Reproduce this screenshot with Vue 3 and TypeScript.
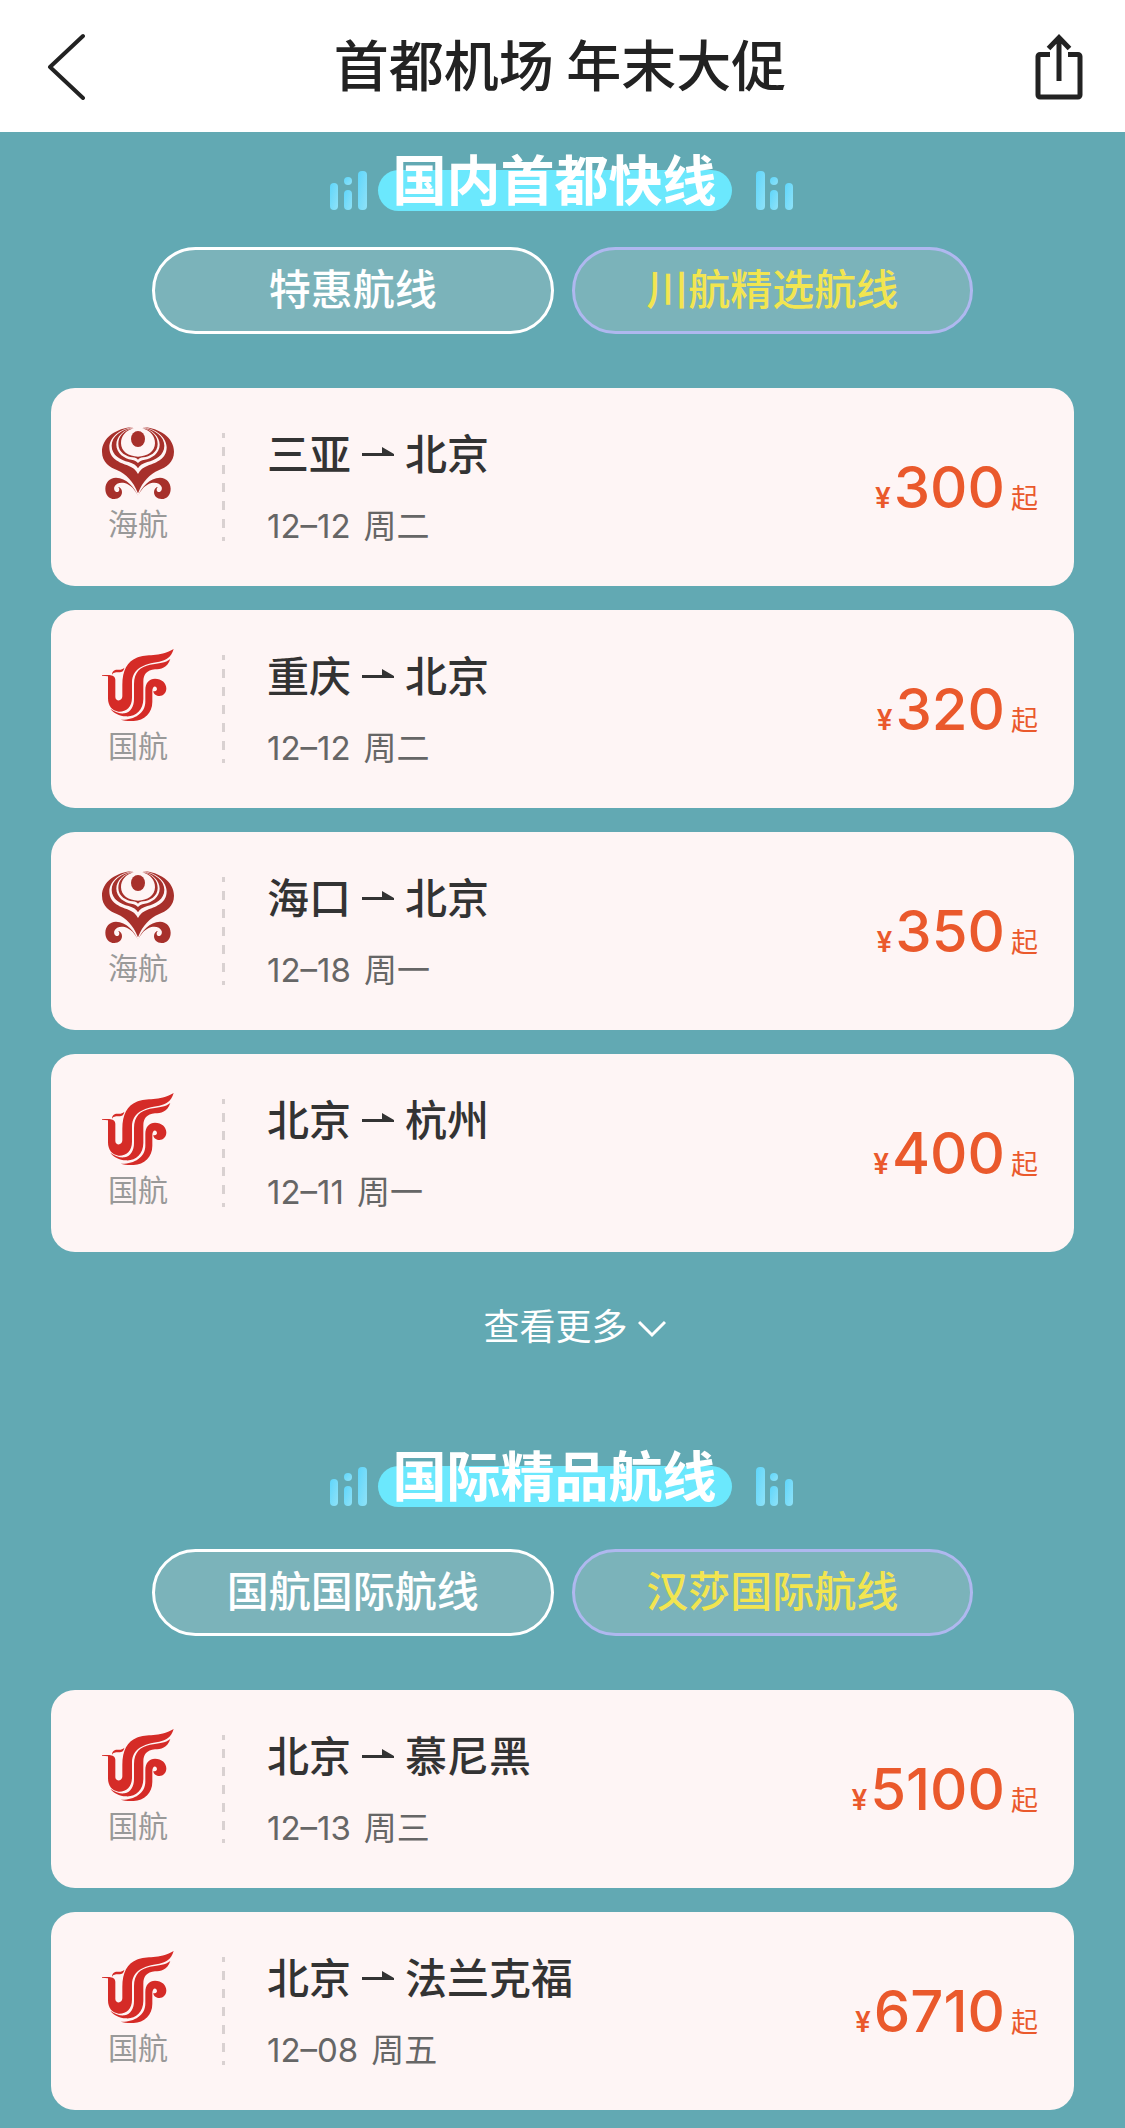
<script setup lang="ts">
import { reactive } from 'vue'

type Airline = 'hna' | 'airchina'

interface Flight {
  airline: Airline
  from: string
  to: string
  date: string
  weekday: string
  price: number
}

interface RouteSection {
  id: string
  title: string
  tabs: string[]
  active: number
  flights: Flight[]
  more: boolean
}

const airlineNames: Record<Airline, string> = { hna: '海航', airchina: '国航' }

const sections = reactive<RouteSection[]>([
  {
    id: 'domestic',
    title: '国内首都快线',
    tabs: ['特惠航线', '川航精选航线'],
    active: 1,
    more: true,
    flights: [
      { airline: 'hna', from: '三亚', to: '北京', date: '12–12', weekday: '周二', price: 300 },
      { airline: 'airchina', from: '重庆', to: '北京', date: '12–12', weekday: '周二', price: 320 },
      { airline: 'hna', from: '海口', to: '北京', date: '12–18', weekday: '周一', price: 350 },
      { airline: 'airchina', from: '北京', to: '杭州', date: '12–11', weekday: '周一', price: 400 },
    ],
  },
  {
    id: 'international',
    title: '国际精品航线',
    tabs: ['国航国际航线', '汉莎国际航线'],
    active: 1,
    more: false,
    flights: [
      { airline: 'airchina', from: '北京', to: '慕尼黑', date: '12–13', weekday: '周三', price: 5100 },
      { airline: 'airchina', from: '北京', to: '法兰克福', date: '12–08', weekday: '周五', price: 6710 },
    ],
  },
])
</script>

<template>
  <div class="page">
    <header class="topbar">
      <button class="icon-button" type="button" aria-label="返回">
        <svg width="40" height="68" viewBox="0 0 40 68" fill="none" stroke="#222" stroke-width="4" stroke-linecap="round" stroke-linejoin="round">
          <path d="M38 4 5 35l33 31" />
        </svg>
      </button>
      <h1>首都机场 年末大促</h1>
      <button class="icon-button" type="button" aria-label="分享">
        <svg width="48" height="68" viewBox="0 0 48 68" fill="none" stroke="#222" stroke-width="5">
          <path d="M15 22.500H5a2 2 0 0 0-2 2V63a2 2 0 0 0 2 2h38a2 2 0 0 0 2-2V24.500a2 2 0 0 0-2-2H33" />
          <path d="M24 49V6M13.500 16.500 24 5.500l10.500 11" />
        </svg>
      </button>
    </header>

    <svg class="defs" aria-hidden="true">
      <defs>
        <linearGradient id="bar-fill" x1="0" y1="0" x2="1" y2="1">
          <stop offset="0" stop-color="#5fd6fb" />
          <stop offset="1" stop-color="#8fe2f8" />
        </linearGradient>
        <g id="hna-half">
          <path d="M-14 51C-66 54-108 84-108 125C-108 158-84 171-62 181C-36 192-14 214 0 250V192C-6 180-16 172-32 166C-56 158-86 146-86 112C-86 82-54 56-14 51Z" />
          <path d="M-13 53C-52 57-79 80-79 107C-79 136-52 150-28 156C-14 160-5 166 0 175V159C-4 154-10 151-20 149C-40 146-65 130-65 104C-65 80-44 58-13 53Z" />
          <path d="M-12 55C-44 60-59 80-59 102C-59 128-34 140-16 142C-8 143-3 145 0 149V140C-28 140-51 124-51 100C-51 78-38 62-12 55Z" />
          <path d="M0 258C-10 232-35 203-66 203C-86 203-98 218-98 236C-98 255-87 267-71 267C-57 267-48 258-48 246C-48 237-54 231-60 231C-55 234-54 244-61 246C-70 247-73 238-71 231C-67 219-52 216-40 219C-22 224-8 240 0 258Z" />
        </g>
        <symbol id="logo-hna" viewBox="-108 51 216 216">
          <g fill="#a7302b">
            <use href="#hna-half" />
            <use href="#hna-half" transform="scale(-1 1)" />
            <ellipse cx="0" cy="87" rx="21" ry="24" />
          </g>
        </symbol>
        <symbol id="logo-airchina" viewBox="36 42 216 216">
          <g fill="#d52b27">
            <path d="M36 120H58C68 121 75 124 76 134V186C76 200 97 200 97 184V150C97 105 112 80 140 68C172 55 205 68 251 42C243 68 228 76 208 80C160 86 127 102 126 142V188C126 216 108 231 86 230C66 228 54 212 54 190V124L36 122Z" />
            <path d="M66 119C66 108 74 103 84 104C92 105 97 103 103 98C101 111 92 112 84 112C76 112 70 113 66 119Z" />
            <path d="M241 72C232 100 212 102 195 103C170 106 160 118 160 140V192C160 226 136 246 108 244C88 243 70 234 61 221C75 232 92 237 104 235C122 232 132 214 132 192V148C132 110 152 95 180 89C208 85 226 84 241 72Z" />
            <path d="M92 254C130 256 166 236 166 200V165C166 143 178 131 195 131C215 131 229 144 229 160C229 174 220 183 208 183C197 183 190 176 190 168C198 172 204 164 199 157C194 151 187 157 187 168V200C187 238 158 260 122 258C110 258 100 256 92 254Z" />
          </g>
        </symbol>
      </defs>
    </svg>

    <main>
      <section v-for="section in sections" :key="section.id" class="routes" :aria-labelledby="section.id">
        <div class="heading">
          <svg width="38" height="40" viewBox="0 0 38 40" fill="url(#bar-fill)" aria-hidden="true">
            <rect x="0" y="12" width="8" height="27" rx="4" />
            <circle cx="18" cy="10" r="4" />
            <rect x="14" y="19" width="8" height="20" rx="4" />
            <rect x="28" y="0" width="9" height="39" rx="4" />
          </svg>
          <h2 :id="section.id">{{ section.title }}</h2>
          <svg width="38" height="40" viewBox="0 0 38 40" fill="url(#bar-fill)" aria-hidden="true">
            <rect x="0" y="0" width="9" height="39" rx="4" />
            <circle cx="18" cy="10" r="4" />
            <rect x="14" y="19" width="8" height="20" rx="4" />
            <rect x="29" y="12" width="8" height="27" rx="4" />
          </svg>
        </div>

        <div class="tabs">
          <button
            v-for="(tab, index) in section.tabs"
            :key="tab"
            type="button"
            class="tab"
            :class="{ active: section.active === index }"
            :aria-pressed="section.active === index"
            @click="section.active = index"
          >
            {{ tab }}
          </button>
        </div>

        <ul class="flights">
          <li v-for="flight in section.flights" :key="flight.from + flight.to">
            <a class="card" href="#">
              <span class="airline">
                <svg width="72" height="72" aria-hidden="true"><use :href="'#logo-' + flight.airline" /></svg>
                <span class="airline-name">{{ airlineNames[flight.airline] }}</span>
              </span>
              <span class="divider"></span>
              <span class="info">
                <span class="route">
                  <span>{{ flight.from }}</span>
                  <svg width="32" height="10" viewBox="0 0 32 10" fill="#333" role="img" aria-label="至">
                    <path d="M0 6H20V0L32 7V9H0Z" />
                  </svg>
                  <span>{{ flight.to }}</span>
                </span>
                <span class="date">
                  <span>{{ flight.date }}</span>
                  <span>{{ flight.weekday }}</span>
                </span>
              </span>
              <span class="price">
                <span class="currency">¥</span>
                <span class="amount">{{ flight.price }}</span>
                <span class="from">起</span>
              </span>
            </a>
          </li>
        </ul>

        <button v-if="section.more" class="more" type="button">
          <span>查看更多</span>
          <svg width="28" height="18" viewBox="0 0 28 18" fill="none" stroke="#fff" stroke-width="3" aria-hidden="true">
            <path d="M1 2 14 15 27 2" />
          </svg>
        </button>
      </section>
    </main>
  </div>
</template>

<style>
body {
  margin: 0;
  background: #62a9b3;
}
</style>

<style scoped>
.page {
  min-height: 100vh;
  background: #62a9b3;
  color: #333;
  font-family: "Noto Sans CJK SC", sans-serif;
}

button {
  margin: 0;
  padding: 0;
  border: 0;
  background: none;
  color: inherit;
  font: inherit;
  cursor: pointer;
}

.defs {
  display: block;
  width: 0;
  height: 0;
}

.topbar {
  display: flex;
  align-items: center;
  justify-content: space-between;
  padding: 32px 42px 32px 45px;
  background: #fff;
}

.icon-button {
  display: flex;
}

h1 {
  margin: 0;
  padding-bottom: 8px;
  color: #222;
  font-size: 55px;
  font-weight: 500;
  line-height: 60px;
}

.routes {
  display: flex;
  flex-direction: column;
  padding-top: 19px;
}

.heading {
  display: flex;
  align-items: flex-end;
  justify-content: center;
  padding-right: 2px;
}

h2 {
  position: relative;
  z-index: 0;
  margin: 0 24px 0 10px;
  padding: 0 15px 6px;
  color: #fff;
  font-size: 54px;
  font-weight: 600;
  line-height: 54px;
}

h2::before {
  content: "";
  position: absolute;
  z-index: -1;
  right: 0;
  bottom: 0;
  left: 0;
  height: 41px;
  border-radius: 21px;
  background: #6be8fd;
}

.tabs {
  display: grid;
  grid-template-columns: 1fr 1fr;
  gap: 18px;
  margin-top: 36px;
  padding: 0 152px;
}

.routes + .routes .tabs {
  margin-top: 42px;
}

.tab {
  padding: 10px 0 17px;
  border: 3px solid #fff;
  border-radius: 44px;
  background: #7bb3ba;
  color: #fff;
  font-size: 42px;
  font-weight: 500;
  line-height: 54px;
}

.tab.active {
  border-color: #afb8ef;
  color: #f2e550;
}

.flights {
  display: flex;
  flex-direction: column;
  gap: 24px;
  margin: 54px 0 0;
  padding: 0 51px;
  list-style: none;
}

.card {
  display: flex;
  align-items: center;
  padding: 39px 36px 39px 51px;
  border-radius: 24px;
  background: #fef5f5;
  color: #333;
  text-decoration: none;
}

.airline {
  display: flex;
  flex-direction: column;
  align-items: center;
  align-self: flex-start;
  gap: 4px;
}

.airline-name {
  color: #999;
  font-size: 30px;
  font-weight: 400;
  line-height: 38px;
}

.divider {
  width: 3px;
  height: 108px;
  margin: 0 42px 0 48px;
  background: repeating-linear-gradient(#d9d1d1 0 5px, transparent 5px 14px, #d9d1d1 14px 18px);
}

.info {
  display: flex;
  flex: 1;
  flex-direction: column;
  gap: 28px;
}

.route {
  display: flex;
  align-items: center;
  gap: 11px;
  font-size: 42px;
  font-weight: 500;
  line-height: 50px;
}

.date {
  display: flex;
  align-items: baseline;
  gap: 13px;
  color: #666;
  font-family: Inter, "Noto Sans CJK SC", sans-serif;
  font-size: 33px;
  font-weight: 400;
  line-height: 42px;
}

.price {
  display: flex;
  align-items: baseline;
  color: #ea592c;
  font-family: Inter, "Noto Sans CJK SC", sans-serif;
}

.currency {
  font-size: 28px;
  font-weight: 600;
}

.amount {
  margin: 0 6px 0 3px;
  font-size: 58px;
  font-weight: 500;
  line-height: 72px;
}

.from {
  font-size: 27px;
  font-weight: 400;
}

.more {
  display: flex;
  align-items: center;
  align-self: center;
  gap: 10px;
  margin: 46px 0 78px;
  padding-left: 24px;
  color: #fff;
  font-size: 36px;
  font-weight: 400;
  line-height: 52px;
}

.more svg {
  margin-top: 10px;
}
</style>
